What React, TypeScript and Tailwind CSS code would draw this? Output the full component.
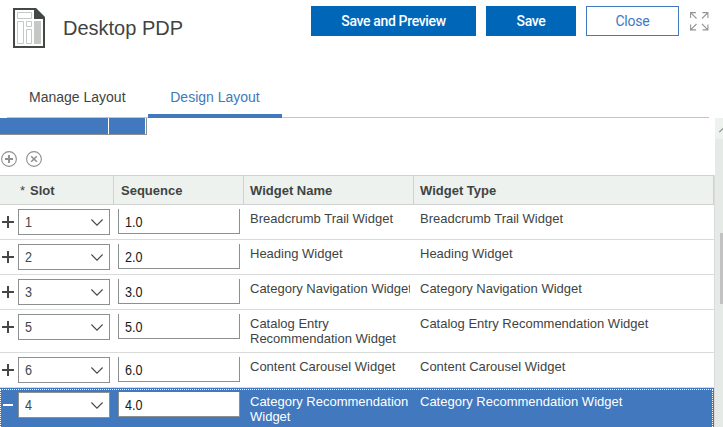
type Row = { slot: string; name: string; type: string; tall?: boolean; selected?: boolean };

const rows: Row[] = [
  { slot: "1", name: "Breadcrumb Trail Widget", type: "Breadcrumb Trail Widget" },
  { slot: "2", name: "Heading Widget", type: "Heading Widget" },
  { slot: "3", name: "Category Navigation Widget", type: "Category Navigation Widget" },
  { slot: "5", name: "Catalog Entry Recommendation Widget", type: "Catalog Entry Recommendation Widget", tall: true },
  { slot: "6", name: "Content Carousel Widget", type: "Content Carousel Widget" },
  { slot: "4", name: "Category Recommendation Widget", type: "Category Recommendation Widget", tall: true, selected: true },
];

function PageIcon() {
  return (
    <svg width="32" height="40" viewBox="0 0 32 40" className="shrink-0">
      <path d="M1 1H22L31 10V39H1Z" fill="#fff" stroke="#434846" strokeWidth="2" />
      <path d="M21 0H23L32 9V11H21Z" fill="#434846" />
      <path d="M21 13H28V36H21Z" fill="#c4c9c6" />
      <g fill="none" stroke="#c4c9c6">
        <path d="M4.5 4.5H18.5V10.5H4.5ZM4.5 13.5H10.5V35.5H4.5ZM13.5 13.5H18.5V18.5H13.5ZM13.5 21.5H18.5V35.5H13.5Z" />
      </g>
    </svg>
  );
}

function ExpandIcon() {
  return (
    <svg width="19" height="19" viewBox="0 0 19 19" fill="none" stroke="#929694" strokeWidth="1.1">
      <path d="M.6 6V.6H6M.6 .6L6.5 6.5M12.5 .6H17.9V6M17.9 .6L12 6.5M.6 12.5V17.9H6M.6 17.9L6.5 12M12.5 17.9H17.9V12.5M17.9 17.9L12 12" />
    </svg>
  );
}

function RoundIcon({ cross }: { cross?: boolean }) {
  return (
    <svg width="16" height="16" viewBox="0 0 16 16" fill="none" stroke="#8c918e">
      <circle cx="8" cy="8" r="7.4" strokeWidth="1.1" />
      {cross ? <path d="M5.2 5.2L10.8 10.8M10.8 5.2L5.2 10.8" strokeWidth="1.6" /> : <path d="M4 8H12M8 4V12" strokeWidth="1.9" />}
    </svg>
  );
}

function GridRow({ row }: { row: Row }) {
  return (
    <div
      className={`relative flex w-[714px] shrink-0 border-b border-[#d9dbda] ${row.tall ? "h-[43px]" : "h-[35px]"} ${
        row.selected ? "bg-[#4178be] text-white" : "text-[#3f4442]"
      }`}
    >
      {row.selected && (
        <svg className="absolute left-0 top-0" width="714" height="43" fill="none" stroke="#fff" strokeDasharray="1 1">
          <path d="M0 1.5H713M.5 2V43M712.5 2V43" />
        </svg>
      )}
      <div className="flex w-[18px] shrink-0 pt-[11px] pl-[2px]">
        <svg width="12" height="12" stroke={row.selected ? "#fff" : "#434846"} strokeWidth="2">
          <path d={row.selected ? "M1 6H11" : "M0 6H12M6 0V12"} />
        </svg>
      </div>
      <div className="mt-1 flex h-[26px] w-[92px] shrink-0 items-center justify-between border border-[#8c9190] bg-white pl-[6px] pr-[6px] text-[14px] text-[#434846]">
        <span className="origin-left scale-x-90">{row.slot}</span>
        <svg width="12" height="7" viewBox="0 0 12 7" fill="none" stroke="#434846" strokeWidth="1.1">
          <path d="M.4 .5L6 6.1L11.6 .5" />
        </svg>
      </div>
      <div className="mt-1 ml-2 flex h-[25px] w-[122px] shrink-0 items-center border border-t-0 border-[#8c9190] bg-white pl-[6px] pt-[2px] text-[14px] text-[#171a19]">
        <span className="origin-left scale-x-90">{row.slot}.0</span>
      </div>
      <div className={`ml-[10px] w-[160px] shrink-0 overflow-hidden pt-[6px] leading-[15px] ${row.tall ? "" : "whitespace-nowrap"}`}>
        {row.name}
      </div>
      <div className="ml-[10px] whitespace-nowrap pt-[6px] leading-[15px]">{row.type}</div>
    </div>
  );
}

export default function App() {
  return (
    <div className="flex h-[427px] w-[723px] flex-col overflow-hidden bg-white font-['Liberation_Sans',Arial,sans-serif] text-[13px] text-[#3f4442]">
      <header className="flex h-[76px] shrink-0 items-start pl-[13px]">
        <div className="mt-2 flex w-[298px] items-center">
          <PageIcon />
          <h1 className="ml-[18px] text-[20px] leading-[40px]">Desktop PDP</h1>
        </div>
        <div className="mt-[6px] flex gap-[10px] font-[Roboto,sans-serif] text-[14px] font-medium">
          <button className="h-[30px] w-[165px] bg-[#0067b8] pt-px tracking-[-0.35px] text-white">Save and Preview</button>
          <button className="h-[30px] w-[90px] bg-[#0067b8] pt-px tracking-[-0.35px] text-white">Save</button>
          <button className="h-[30px] w-[93px] border border-[#4178be] pt-px font-normal tracking-[-0.2px] text-[#4178be]">Close</button>
        </div>
        <div className="mt-3 ml-[11px]">
          <ExpandIcon />
        </div>
      </header>
      <nav className="ml-[7px] flex h-[42px] w-[702px] shrink-0 border-b border-[#c3c6c4] text-[14px] leading-[42px]">
        <span className="w-[141px] pl-[22px]">Manage Layout</span>
        <span className="h-[42px] w-[134px] border-b-4 border-[#4178be] text-center text-[#4178be]">Design Layout</span>
      </nav>
      <div className="flex min-h-0 flex-1">
        <main className="flex w-[715px] shrink-0 flex-col">
          <div className="flex h-[17px] w-[147px] shrink-0 gap-px border-r border-b border-[#8c918e] pr-px">
            <div className="w-[108px] bg-[#4178be]" />
            <div className="flex-1 bg-[#4178be]" />
          </div>
          <div className="flex h-10 shrink-0 gap-[9px] pl-px pt-4">
            <RoundIcon />
            <RoundIcon cross />
          </div>
          <div className="flex shrink-0 flex-col border-r border-[#d9dbda]">
            <div className="flex h-[30px] shrink-0 border-y border-[#cfd2d0] bg-[#edf2ef] font-bold leading-[29px]">
              <div className="w-[114px] border-r border-[#cfd2d0] pl-5"><span className="mr-[5px] font-normal">*</span>Slot</div>
              <div className="w-[130px] border-r border-[#cfd2d0] pl-[7px]">Sequence</div>
              <div className="w-[170px] border-r border-[#cfd2d0] pl-[6px]">Widget Name</div>
              <div className="w-[300px] border-r border-[#cfd2d0] pl-[6px]">Widget Type</div>
            </div>
            {rows.map((row) => <GridRow key={row.slot} row={row} />)}
          </div>
        </main>
        <aside className="flex w-2 flex-col items-end overflow-hidden bg-[#e5eae7]">
          <div className="h-[21px] w-2 shrink-0 bg-[#edf2ef] pl-1 pt-[9px]">
            <svg width="10" height="6" fill="none" stroke="#8c918e" strokeWidth="1.2"><path d="M.3 5L5 .5L9.7 5" /></svg>
          </div>
          <div className="mt-[94px] h-[71px] w-[3px] shrink-0 bg-[#c2c2c2]" />
        </aside>
      </div>
    </div>
  );
}
